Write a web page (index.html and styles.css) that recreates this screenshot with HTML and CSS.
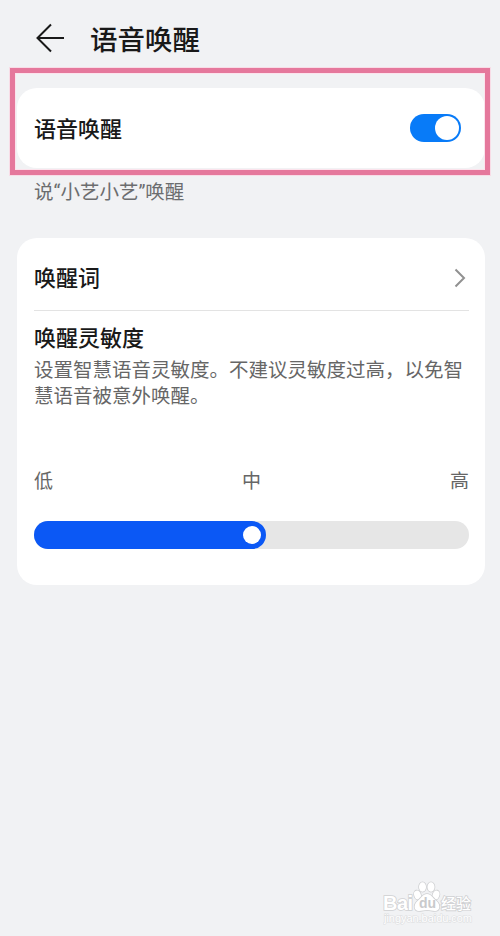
FILE: index.html
```html
<!DOCTYPE html>
<html lang="zh-CN">
<head>
    <meta charset="UTF-8">
    <meta name="viewport" content="width=device-width, initial-scale=1.0">
    <title>语音唤醒</title>
    <link rel="stylesheet" href="styles.css">
</head>
<body>
  <div class="page">
    <header class="header">
        <svg class="back" width="30" height="30" viewBox="0 0 30 30">
            <path d="M16 1.5 L2.5 15 L16 28.5 M2.5 15 H29"/>
        </svg>
        <h1>语音唤醒</h1>
    </header>

    <section class="card switch-card">
        <span class="label">语音唤醒</span>
        <div class="toggle"><div class="toggle-knob"></div></div>
        <div class="highlight"></div>
    </section>
    <p class="hint">说“小艺小艺”唤醒</p>

    <section class="card settings-card">
        <div class="word-row">
            <span class="label">唤醒词</span>
            <svg class="arrow" width="12" height="20" viewBox="0 0 12 20">
                <path d="M1.5 1.5 L10 10 L1.5 18.5"/>
            </svg>
        </div>
        <h2 class="label">唤醒灵敏度</h2>
        <p class="desc">设置智慧语音灵敏度。不建议灵敏度过高，以免智慧语音被意外唤醒。</p>
        <div class="levels">
            <span>低</span>
            <span>中</span>
            <span>高</span>
        </div>
        <div class="slider">
            <div class="slider-fill"><div class="slider-knob"></div></div>
        </div>
    </section>

    <div class="watermark">
        <svg width="92" height="50" viewBox="0 0 92 50">
            <g class="mark">
                <ellipse cx="34.5" cy="17" rx="3.3" ry="4.6" transform="rotate(-18 34.5 17)"/>
                <ellipse cx="39.5" cy="9" rx="3.5" ry="4.7"/>
                <ellipse cx="48" cy="9" rx="3.5" ry="4.7"/>
                <ellipse cx="53" cy="17" rx="3.3" ry="4.6" transform="rotate(18 53 17)"/>
                <path d="M44 16 C39.5 16 38.5 20 34.5 23 C30 27 31 33 36 33 C39 33 41 32 44 32 C47 32 49 33 52 33 C57 33 58 27 53.5 23 C49.5 20 48.5 16 44 16 Z"/>
            </g>
            <text class="mark bai" x="0" y="31.5" textLength="30">Bai</text>
            <text class="du" x="36" y="30">du</text>
            <text class="mark jingyan" x="58" y="31" textLength="30">经验</text>
            <text class="mark url" x="1" y="44" textLength="88">jingyan.baidu.com</text>
        </svg>
    </div>
  </div>
</body>
</html>
```

FILE: styles.css
```css
*{
    margin: 0;
    padding: 0;
    box-sizing: border-box;
}
body{
    background-color: #f1f2f4;
    color: #191919;
    font-family: Roboto, "Noto Sans CJK SC", sans-serif;
}
.page{
    height: 936px;
    padding: 0 15px 0 17px;
    position: relative;
    overflow: hidden;
}
.header{
    height: 88px;
    padding: 20px 0 0 18px;
    display: flex;
    align-items: flex-start;
    gap: 25px;
}
.back{
    margin-top: 3px;
    fill: none;
    stroke: #191919;
    stroke-width: 2;
}
h1{
    font-size: 27.5px;
    line-height: 42px;
    font-weight: 500;
}
.card{
    background-color: #fff;
    border-radius: 20px;
}
.switch-card{
    height: 80px;
    padding: 0 24px 0 17px;
    display: flex;
    align-items: center;
    justify-content: space-between;
    position: relative;
}
.label{
    padding-top: 2px;
    font-size: 22px;
    line-height: 30px;
    font-weight: 500;
}
.switch-card .label{
    padding-top: 4px;
}
.toggle{
    width: 51px;
    height: 28px;
    padding: 2px;
    border-radius: 14px;
    background-color: #087bf8;
    display: flex;
    justify-content: flex-end;
}
.toggle-knob{
    width: 24px;
    height: 24px;
    border-radius: 50%;
    background-color: #fff;
}
.highlight{
    position: absolute;
    top: -20px;
    left: -7px;
    right: -5px;
    bottom: -7px;
    border: 5px solid #e5789c;
    box-shadow: inset 0 0 0 1px #fce3ec, 0 0 0 1px #f8dce6;
}
.hint{
    margin-top: 11px;
    padding-left: 17px;
    font-size: 19.5px;
    line-height: 28px;
    color: #6c6d6f;
}
.settings-card{
    height: 347px;
    margin-top: 31px;
    padding: 7px 16px 0 17px;
}
.word-row{
    height: 66px;
    padding-right: 3px;
    border-bottom: 1px solid #e3e3e3;
    display: flex;
    align-items: center;
    justify-content: space-between;
}
.arrow{
    fill: none;
    stroke: #919191;
    stroke-width: 2;
}
h2.label{
    margin-top: 11px;
}
.desc{
    margin-top: 4px;
    font-size: 19.5px;
    line-height: 25.5px;
    color: #666;
}
.levels{
    margin-top: 59px;
    display: flex;
    justify-content: space-between;
    font-size: 19px;
    line-height: 28px;
    color: #666;
}
.slider{
    height: 28px;
    margin-top: 25px;
    border-radius: 14px;
    background-color: #e6e6e6;
}
.slider-fill{
    width: 232px;
    height: 28px;
    padding-right: 5px;
    border-radius: 14px;
    background-color: #0b58f5;
    display: flex;
    align-items: center;
    justify-content: flex-end;
}
.slider-knob{
    width: 18px;
    height: 18px;
    border-radius: 50%;
    background-color: #fff;
}
.watermark{
    position: absolute;
    left: 383px;
    top: 878px;
}
.mark{
    fill: #fff;
    stroke: #cfd0d2;
    stroke-width: 1.6;
    paint-order: stroke;
}
.bai{
    font: bold 20px "Liberation Sans", sans-serif;
}
.du{
    font: bold 14px "Liberation Sans", sans-serif;
    fill: #c9cacc;
}
.jingyan{
    font: 500 15px "Noto Sans CJK SC", sans-serif;
}
.url{
    font: 11px "Liberation Sans", sans-serif;
    stroke: #dddee0;
    stroke-width: 1.2;
}
```
